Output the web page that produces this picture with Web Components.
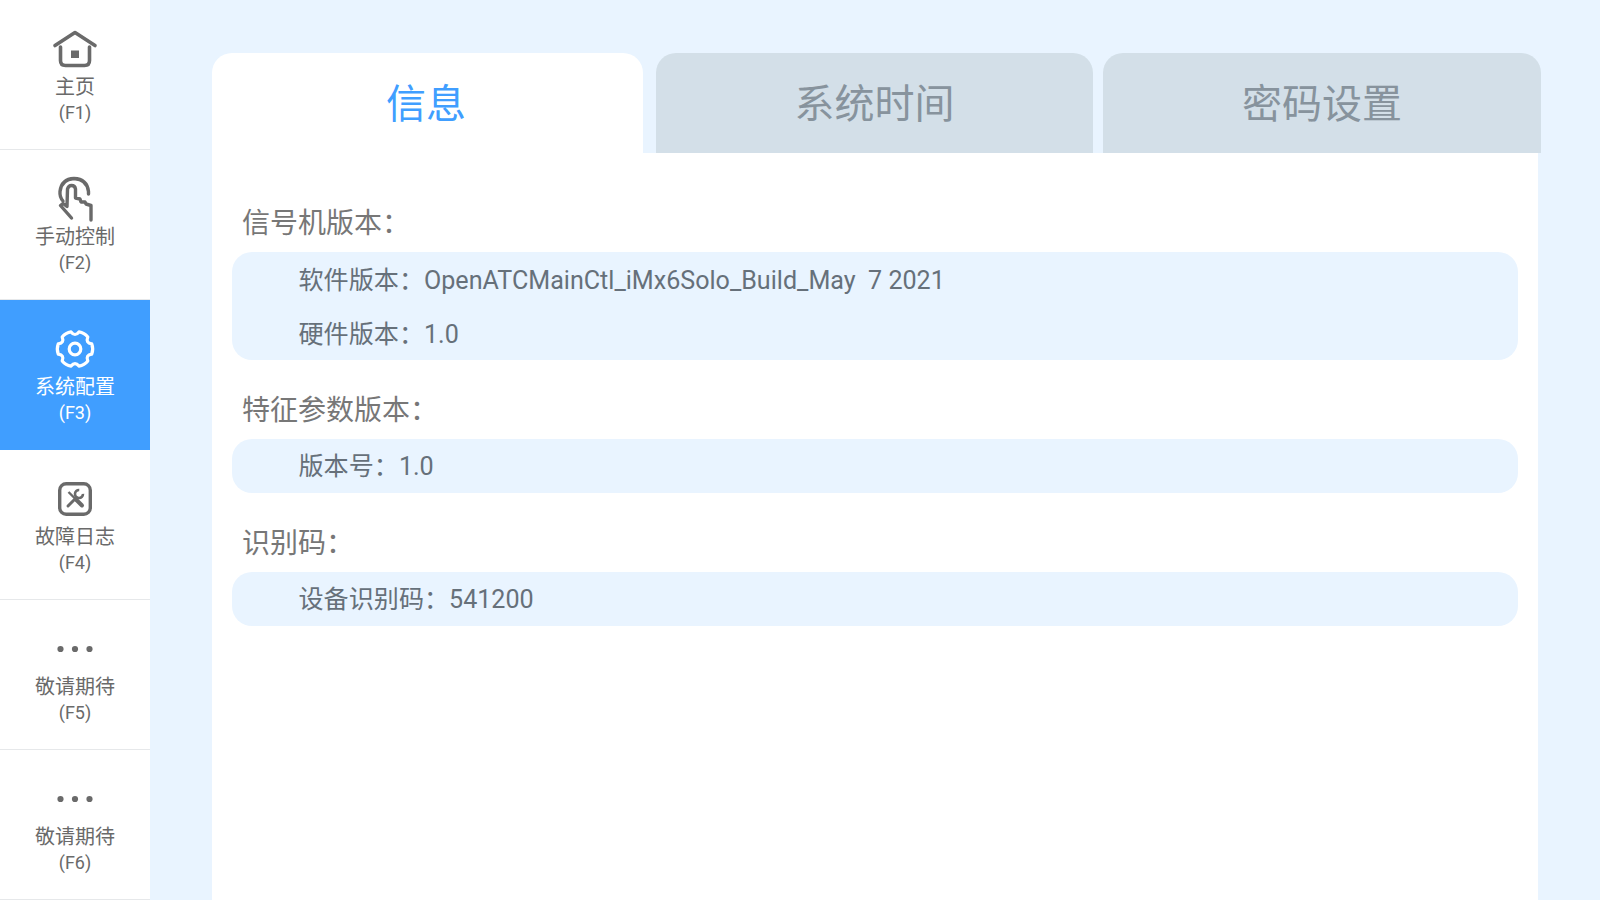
<!DOCTYPE html>
<html lang="zh">
<head>
<meta charset="utf-8">
<title>OpenATC</title>
<style>
html, body { margin:0; height:100%; overflow:hidden; background:#e9f4ff; }
body { font-family:Roboto,"Noto Sans CJK SC",sans-serif; }
</style>
</head>
<body>
<atc-app>
    <atc-nav slot="nav">
        <atc-nav-item icon="home" label="主页" key="(F1)"></atc-nav-item>
        <atc-nav-item icon="hand" label="手动控制" key="(F2)"></atc-nav-item>
        <atc-nav-item icon="gear" label="系统配置" key="(F3)" active></atc-nav-item>
        <atc-nav-item icon="tools" label="故障日志" key="(F4)"></atc-nav-item>
        <atc-nav-item icon="dots" label="敬请期待" key="(F5)"></atc-nav-item>
        <atc-nav-item icon="dots" label="敬请期待" key="(F6)"></atc-nav-item>
    </atc-nav>
    <atc-tabs>
        <atc-tab slot="tabs" style="width:431px;margin-right:13px" active>信息</atc-tab>
        <atc-tab slot="tabs" style="width:437px;margin-right:10px">系统时间</atc-tab>
        <atc-tab slot="tabs" style="width:438px">密码设置</atc-tab>
        <atc-section title="信号机版本：">
            <atc-line>软件版本：OpenATCMainCtl_iMx6Solo_Build_May  7 2021</atc-line>
            <atc-line>硬件版本：1.0</atc-line>
        </atc-section>
        <atc-section title="特征参数版本：">
            <atc-line>版本号：1.0</atc-line>
        </atc-section>
        <atc-section title="识别码：">
            <atc-line>设备识别码：541200</atc-line>
        </atc-section>
    </atc-tabs>
</atc-app>
<script>
// six lobes with square-ish shoulders and shallow valleys between them
function gearPath(cx, cy, R, r) {
    const p = (deg, rad) => {
        const a = deg * Math.PI / 180;
        return (cx + rad * Math.cos(a)).toFixed(2) + ' ' + (cy + rad * Math.sin(a)).toFixed(2);
    };
    let d = 'M' + p(-17, R);
    for (let i = 0; i < 6; i++) {
        const a = i * 60;
        d += ' Q' + p(a, R + 1.2) + ' ' + p(a + 17, R);
        d += ' Q' + p(a + 30, r - 2) + ' ' + p(a + 43, R);
    }
    return d + 'Z';
}

const ICONS = {
    home: `<svg width="50" height="40" viewBox="0 0 50 40" fill="none" stroke="currentColor" stroke-width="3.6" stroke-linecap="round" stroke-linejoin="round">
        <path d="M5 16.5 25 3.5l20 13"/>
        <path d="M10.5 18v13.5q0 5 5 5h19q5 0 5-5V18"/>
        <rect x="21" y="21.5" width="8" height="7.5" fill="currentColor" stroke="none"/></svg>`,
    hand: `<svg width="50" height="55" viewBox="0 0 50 55" fill="none" stroke="currentColor" stroke-width="3.4" stroke-linejoin="round" style="margin-top:-9px">
        <path d="M13 31Q9.500 27 10 21.500 11.500 9 24 8.500 37 9 38.500 21.500V24" stroke-linecap="round"/>
        <path d="M10.500 35.500 21.500 48M10.500 35.500 13 33.500 17 36.500 17.500 19Q18.500 15.500 21.500 15.500 25 15.500 25.500 19V28L30 29 31 32 35 32 36 34 41 35.500V50" stroke-linecap="round"/></svg>`,
    gear: `<svg width="44" height="40" viewBox="0 0 44 40" fill="none" stroke="currentColor" stroke-width="3.2" stroke-linejoin="round">
        <path d="${gearPath(22, 20, 17.5, 14)}"/>
        <circle cx="22" cy="20" r="5.800"/></svg>`,
    tools: `<svg width="50" height="50" viewBox="0 0 50 50" fill="none" stroke="currentColor" style="margin-top:-4px">
        <rect x="9.700" y="8.700" width="30.600" height="30.600" rx="6.500" stroke-width="3.400"/>
        <path d="M18.500 17 25 23.500" stroke-width="2.400"/>
        <path d="M26.500 25 32 30.500" stroke-width="4" stroke-linecap="round"/>
        <path d="M18 31 26.500 22.500" stroke-width="3" stroke-linecap="round"/>
        <path d="M32.500 17.500a4 4 0 1 1-4.800-2.300" stroke-width="2.600" transform="rotate(20 29 19.500)"/></svg>`,
    dots: `<svg width="44" height="40" viewBox="0 0 44 40" fill="currentColor">
        <circle cx="7.500" cy="20" r="3.100"/><circle cx="22" cy="20" r="3.100"/><circle cx="36.500" cy="20" r="3.100"/></svg>`,
};

customElements.define('atc-app', class extends HTMLElement {
    constructor() {
        super();
        this.attachShadow({mode:'open'}).innerHTML = `
        <style>
        :host { display:flex; height:900px; overflow:hidden; }
        .side { flex:none; width:150px; }
        .main { flex:1; min-width:0; padding:53px 0 0 62px; }
        </style>
        <div class=side><slot name=nav></slot></div>
        <div class=main><slot></slot></div>`;
    }
});

customElements.define('atc-nav', class extends HTMLElement {
    constructor() {
        super();
        this.attachShadow({mode:'open'}).innerHTML = `
        <style>:host { display:flex; flex-direction:column; }</style>
        <slot></slot>`;
    }
});

customElements.define('atc-nav-item', class extends HTMLElement {
    constructor() {
        super();
        this.attachShadow({mode:'open'});
    }
    connectedCallback() {
        this.shadowRoot.innerHTML = `
        <style>
        :host { display:flex; flex-direction:column; align-items:center; box-sizing:border-box; height:150px; padding-top:29px; background:#fff; color:#6a6a6a; border-bottom:1px solid #e6e8ea; }
        :host([active]) { background:#409eff; color:#fff; border-bottom-color:#409eff; }
        .icon { display:flex; justify-content:center; align-items:flex-start; height:40px; margin-bottom:5px; }
        .label { font-size:20px; line-height:26px; }
        .key { font-size:18px; line-height:26px; }
        </style>
        <div class=icon>${ICONS[this.getAttribute('icon')]}</div>
        <div class=label>${this.getAttribute('label')}</div>
        <div class=key>${this.getAttribute('key')}</div>`;
    }
});

customElements.define('atc-tabs', class extends HTMLElement {
    constructor() {
        super();
        this.attachShadow({mode:'open'}).innerHTML = `
        <style>
        :host { display:block; width:1326px; }
        .bar { display:flex; width:1340px; }
        .panel { background:#fff; height:747px; box-sizing:border-box; padding:20px 20px 0; }
        </style>
        <div class=bar><slot name=tabs></slot></div>
        <div class=panel><slot></slot></div>`;
    }
});

customElements.define('atc-tab', class extends HTMLElement {
    constructor() {
        super();
        this.attachShadow({mode:'open'}).innerHTML = `
        <style>
        :host { display:flex; flex:none; justify-content:center; align-items:center; height:100px; box-sizing:border-box; padding-bottom:4px; border-radius:20px 20px 0 0; background:#d3dfe8; color:#87939d; font-size:40px; }
        :host([active]) { background:#fff; color:#409eff; padding-right:3px; }
        </style>
        <slot></slot>`;
    }
});

customElements.define('atc-section', class extends HTMLElement {
    constructor() {
        super();
        this.attachShadow({mode:'open'});
    }
    connectedCallback() {
        this.shadowRoot.innerHTML = `
        <style>
        :host { display:block; padding-top:31px; }
        :host(:first-child) { padding-top:1px; }
        .title { font-size:28px; line-height:40px; margin-bottom:8px; padding-left:10px; color:#777; }
        .box { background:#e9f4ff; border-radius:20px; }
        </style>
        <div class=title>${this.getAttribute('title')}</div>
        <div class=box><slot></slot></div>`;
    }
});

customElements.define('atc-line', class extends HTMLElement {
    constructor() {
        super();
        this.attachShadow({mode:'open'}).innerHTML = `
        <style>
        :host { display:block; box-sizing:border-box; height:54px; padding:2px 0 0 66.500px; line-height:54px; font-size:25.100px; color:#66707a; overflow:hidden; }
        :host(:only-child) { padding-top:1px; }
        .text { white-space:pre; }
        </style>
        <div class=text><slot></slot></div>`;
    }
});
</script>
</body>
</html>
